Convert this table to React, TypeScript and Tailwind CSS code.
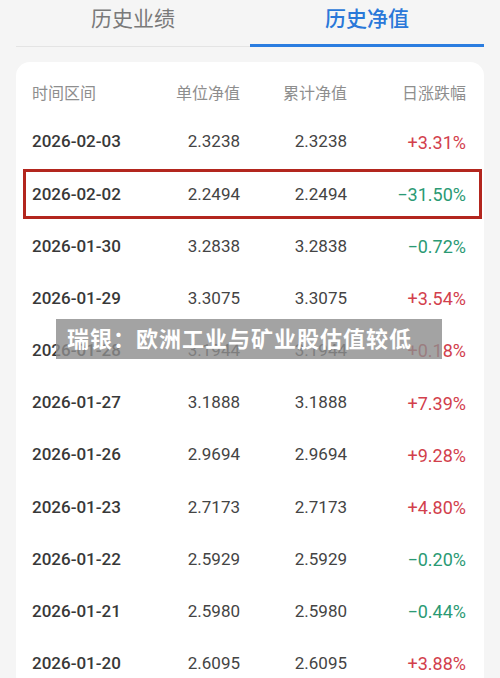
import React from 'react'

type Row = { date: string; unit: string; total: string; change: string }

const rows: Row[] = [
  { date: '2026-02-03', unit: '2.3238', total: '2.3238', change: '+3.31%' },
  { date: '2026-02-02', unit: '2.2494', total: '2.2494', change: '−31.50%' },
  { date: '2026-01-30', unit: '3.2838', total: '3.2838', change: '−0.72%' },
  { date: '2026-01-29', unit: '3.3075', total: '3.3075', change: '+3.54%' },
  { date: '2026-01-28', unit: '3.1944', total: '3.1944', change: '+0.18%' },
  { date: '2026-01-27', unit: '3.1888', total: '3.1888', change: '+7.39%' },
  { date: '2026-01-26', unit: '2.9694', total: '2.9694', change: '+9.28%' },
  { date: '2026-01-23', unit: '2.7173', total: '2.7173', change: '+4.80%' },
  { date: '2026-01-22', unit: '2.5929', total: '2.5929', change: '−0.20%' },
  { date: '2026-01-21', unit: '2.5980', total: '2.5980', change: '−0.44%' },
  { date: '2026-01-20', unit: '2.6095', total: '2.6095', change: '+3.88%' },
]

const font = { fontFamily: 'Roboto, "Noto Sans CJK SC", sans-serif' }

export default function App() {
  return (
    <div className="relative w-[500px] h-[678px] overflow-hidden bg-[#f5f5f5]" style={font}>
      {/* Tabs */}
      <div className="flex items-end px-4 h-[47px]">
        <div className="flex-1 h-full flex items-start justify-center pt-[4px] border-b border-[#e4e4e4] text-[21px] text-[#7a7a7a]">
          历史业绩
        </div>
        <div className="flex-1 h-full flex items-start justify-center pt-[4px] border-b-[3px] border-[#2b7de0] text-[21px] font-medium text-[#2a78d9]">
          历史净值
        </div>
      </div>

      {/* Table card */}
      <div className="mx-4 mt-[15px] bg-white rounded-[14px] pt-[9px] pl-4 pr-[17px]">
        <div className="grid grid-cols-[120px_88px_107px_119px] h-[45px] items-center text-[16px] text-[#8e8e8e]">
          <span>时间区间</span>
          <span className="text-right">单位净值</span>
          <span className="text-right">累计净值</span>
          <span className="text-right">日涨跌幅</span>
        </div>
        {rows.map((r, i) => (
          <div key={r.date} className="relative grid grid-cols-[120px_88px_107px_119px] h-[52.2px] items-center text-[17px]">
            <span className="font-medium text-[#383838]">{r.date}</span>
            <span className="text-right text-[#444444]">{r.unit}</span>
            <span className="text-right text-[#444444]">{r.total}</span>
            <span className={'text-right text-[18px] ' + (r.change.startsWith('+') ? 'text-[#d2404c]' : 'text-[#2b9a74]')}>
              {r.change}
            </span>
            {i === 1 && (
              <div className="absolute left-[-9px] right-[-15px] top-[1px] bottom-[1px] border-[3px] border-[#b3261e]" />
            )}
          </div>
        ))}
      </div>

      {/* Headline caption over the screenshot */}
      <div className="absolute left-[56px] top-[319px] w-[386px] h-[40px] bg-[#8c8c8c]/80 flex items-center pl-[11px]">
        <span className="text-white font-bold text-[22px] tracking-[1px]">瑞银：欧洲工业与矿业股估值较低</span>
      </div>
    </div>
  )
}
